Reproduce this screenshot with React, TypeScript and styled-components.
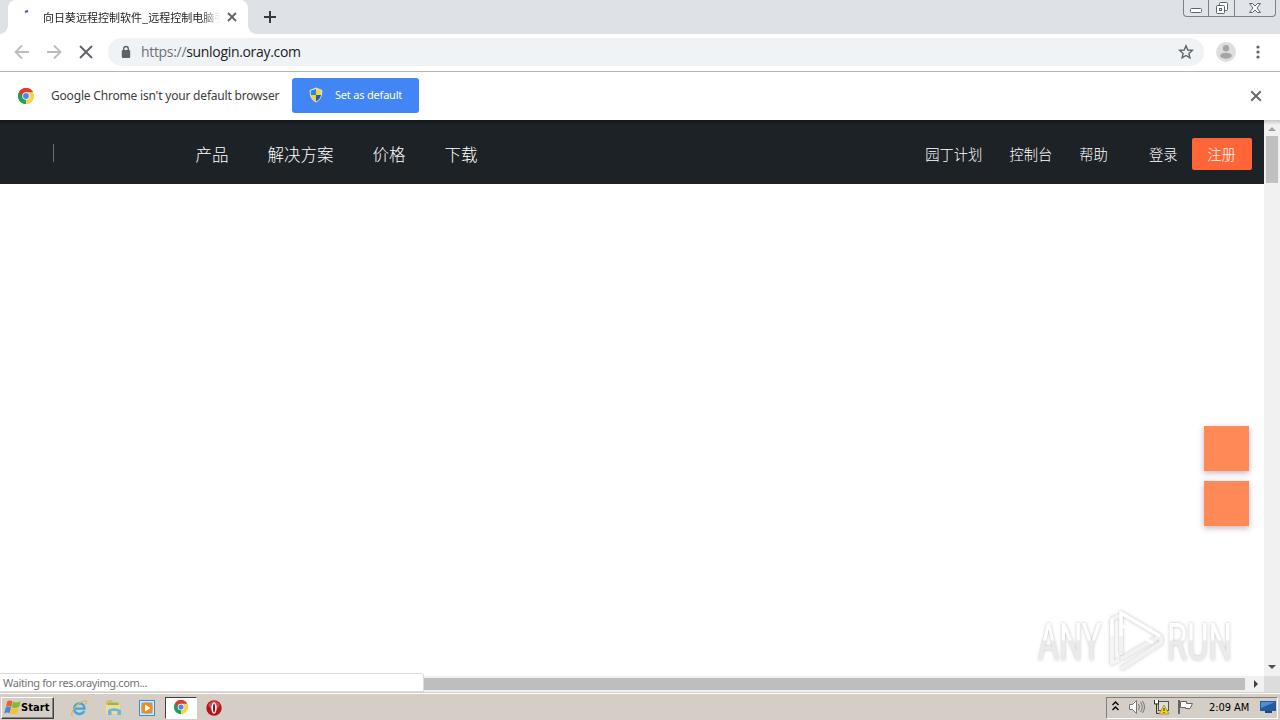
import styled, { createGlobalStyle } from "styled-components";

const GlobalStyle = createGlobalStyle`
  * {
    box-sizing: border-box;
  }
  body {
    margin: 0;
    overflow: hidden;
    background: #fff;
    font-family: "Noto Sans", "Noto Sans CJK SC", sans-serif;
  }
  svg {
    display: block;
    flex: none;
  }
`;

const Screen = styled.div`
  width: 1280px;
  height: 720px;
  display: flex;
  flex-direction: column;
  overflow: hidden;
`;

const TabStrip = styled.div`
  height: 34px;
  display: flex;
  align-items: flex-start;
  background: #dee1e6;
  flex: none;
`;

const TabEdge = styled.div<{ $side: "left" | "right" }>`
  width: 8px;
  height: 34px;
  background: radial-gradient(
    circle at ${(p) => (p.$side === "left" ? "0 26px" : "8px 26px")},
    #dee1e6 7.5px,
    #fff 8px
  );
  clip-path: inset(26px 0 0 0);
`;

const Tab = styled.div`
  width: 240px;
  height: 34px;
  display: flex;
  align-items: center;
  background: #fff;
  border-radius: 8px 8px 0 0;
  padding-left: 16px;
`;

const TabTitle = styled.div`
  width: 178px;
  margin-left: 9px;
  margin-right: 6px;
  padding-bottom: 1px;
  white-space: nowrap;
  font-family: "Noto Sans CJK SC", sans-serif;
  font-size: 11px;
  line-height: 18px;
  color: #202226;
  mask-image: linear-gradient(to right, #000 158px, transparent 177px);
`;

const NewTab = styled.div`
  padding: 11px 0 0 8px;
`;

const WindowButtons = styled.div`
  display: flex;
  height: 17px;
  margin-left: auto;
  margin-right: 4px;
  border: 1px solid #7c828c;
  border-top: none;
  border-radius: 0 0 4px 4px;
  background: #e1e4e9;
`;

const WindowButton = styled.div<{ $width: number }>`
  width: ${(p) => p.$width}px;
  display: flex;
  justify-content: center;
  & + & {
    border-left: 1px solid #7c828c;
  }
`;

const Toolbar = styled.div`
  height: 38px;
  display: flex;
  align-items: center;
  padding-left: 13px;
  padding-bottom: 2px;
  border-bottom: 1px solid #b3b5b7;
  background: #fff;
  flex: none;
`;

const NavIcons = styled.div`
  display: flex;
  gap: 14px;
  width: 95px;
`;

const AddressBar = styled.div`
  width: 1096px;
  height: 28px;
  display: flex;
  align-items: center;
  padding: 0 10px 0 13px;
  border-radius: 14px;
  background: #f0f3f6;
`;

const Url = styled.div`
  margin-left: 10px;
  flex: 1;
  font-family: "Open Sans", "Noto Sans", sans-serif;
  font-size: 14px;
  line-height: 20px;
  letter-spacing: -0.32px;
  color: #202124;
  span {
    color: #6c7075;
  }
`;

const ToolbarEnd = styled.div`
  display: flex;
  align-items: center;
  gap: 20px;
  padding-left: 12px;
`;

const InfoBar = styled.div`
  height: 48px;
  display: flex;
  align-items: center;
  padding: 0 18px;
  background: #fff;
  flex: none;
`;

const InfoText = styled.div`
  width: 228px;
  margin-left: 17px;
  margin-right: 13px;
  padding-bottom: 2px;
  white-space: nowrap;
  font-size: 12px;
  letter-spacing: -0.19px;
  color: #3b3d40;
`;

const DefaultButton = styled.button`
  width: 127px;
  height: 35px;
  display: flex;
  align-items: center;
  gap: 12px;
  margin-bottom: 2px;
  padding: 0 0 1px 17px;
  border: none;
  border-radius: 3px;
  background: #4285f4;
  color: #fff;
  font-family: "Noto Sans", sans-serif;
  font-size: 11px;
  letter-spacing: -0.2px;
  white-space: nowrap;
`;

const InfoClose = styled.div`
  margin-left: auto;
`;

const Viewport = styled.div`
  height: 572px;
  display: grid;
  grid-template-columns: 1264px 16px;
  grid-template-rows: 556px 16px;
  position: relative;
  flex: none;
`;

const Page = styled.div`
  background: #fff;
`;

const SiteHeader = styled.header`
  height: 64px;
  display: flex;
  align-items: center;
  padding: 4px 12px 0 53px;
  background: linear-gradient(#13171b, #1d2227 5px);
  color: #fff;
  font-family: "Noto Sans CJK SC", sans-serif;
  font-weight: 300;
`;

const LogoDivider = styled.div`
  width: 1px;
  height: 18px;
  margin-top: -2px;
  margin-right: 141.5px;
  background: #6a6f74;
`;

const MainNav = styled.nav`
  display: flex;
  gap: 39px;
  font-size: 16.5px;
  line-height: 24px;
`;

const SideNav = styled.nav`
  display: flex;
  align-items: center;
  gap: 27px;
  margin-left: auto;
  font-size: 14.3px;
  line-height: 20px;
`;

const Login = styled.a`
  margin-left: 14px;
`;

const Register = styled.a`
  width: 60px;
  height: 32px;
  margin-left: -12.5px;
  padding-right: 1px;
  border-radius: 2px;
  background: #ff6536;
  line-height: 32px;
  text-align: center;
`;

const FloatButtons = styled.div`
  position: absolute;
  left: 1204px;
  top: 306px;
  display: grid;
  gap: 10px;
`;

const FloatButton = styled.div`
  width: 45px;
  height: 45px;
  background: #ff8a57;
  box-shadow: 0 2px 6px rgba(120, 70, 100, 0.42);
`;

const Watermark = styled.svg`
  position: absolute;
  left: 1030px;
  top: 480px;
  font-family: Roboto, sans-serif;
  font-size: 52px;
`;

const VScroll = styled.div`
  display: flex;
  flex-direction: column;
  align-items: center;
  background: linear-gradient(#c5c5c5, #f1f1f1 5px);
`;

const VThumb = styled.div`
  width: 12px;
  height: 47px;
  background: #c0c0c0;
`;

const ScrollArrow = styled.svg`
  width: 16px;
  height: 16px;
`;

const VSpace = styled.div`
  flex: 1;
`;

const HScroll = styled.div`
  display: flex;
  align-items: center;
  background: #f1f1f1;
`;

const HThumb = styled.div`
  width: 1229px;
  height: 12px;
  margin-left: 16px;
  margin-right: 3px;
  background: #bebebe;
`;

const ScrollCorner = styled.div`
  background: #dcdcdc;
`;

const StatusBubble = styled.div`
  position: absolute;
  left: 0;
  bottom: 0;
  width: 424px;
  height: 19px;
  padding-left: 3px;
  border: 1px solid #dcdcdc;
  border-left: none;
  border-top-right-radius: 3px;
  background: #fff;
  font-size: 11px;
  line-height: 18px;
  letter-spacing: -0.38px;
  color: #717376;
`;

const Taskbar = styled.div`
  height: 28px;
  display: flex;
  align-items: center;
  padding: 2px 2px 0 1px;
  border-top: 1px solid #d5cfc6;
  box-shadow: inset 0 1px #fff;
  background: #d5cec6;
  font-family: "DejaVu Sans Condensed", "DejaVu Sans", sans-serif;
  font-size: 11px;
  color: #000;
  flex: none;
`;

const StartButton = styled.div`
  width: 53px;
  height: 22px;
  display: flex;
  align-items: center;
  padding-left: 2px;
  padding-bottom: 1px;
  border: 1px solid;
  border-color: #fff #404040 #404040 #fff;
  box-shadow: inset -1px -1px #8a857d;
  font-weight: bold;
  letter-spacing: 0.1px;
`;

const QuickLaunch = styled.div`
  display: flex;
  align-items: center;
  margin-left: 8px;
`;

const TaskItem = styled.div<{ $active?: boolean }>`
  width: ${(p) => (p.$active ? 32 : 34)}px;
  height: 22px;
  display: flex;
  align-items: center;
  justify-content: center;
  margin-left: ${(p) => (p.$active ? 1 : 0)}px;
  padding-bottom: ${(p) => (p.$active ? 2 : 0)}px;
  border: 1px solid;
  border-color: ${(p) =>
    p.$active ? "#404040 #fff #fff #404040" : "transparent"};
  background: ${(p) => (p.$active ? "#fff" : "transparent")};
`;

const Tray = styled.div`
  width: 172px;
  height: 22px;
  display: flex;
  align-items: center;
  margin-left: auto;
  padding-left: 4px;
  padding-bottom: 1px;
  border: 1px solid;
  border-color: #808080 #fff #fff #808080;
`;

const Clock = styled.div`
  width: 51px;
  margin-left: 15px;
  white-space: nowrap;
  font-family: "DejaVu Sans Condensed", sans-serif;
  letter-spacing: -0.05px;
`;

const TrayIcons = styled.div`
  display: flex;
  align-items: center;
  gap: 7px;
  svg:first-child {
    margin-right: 1px;
  }
`;

const ChromeLogo = ({ size = 16 }: { size?: number }) => (
  <svg width={size} height={size} viewBox="0 0 16 16">
    <path d="M8 8 1.1 4A8 8 0 0 1 14.9 4Z" fill="#dc3d31" />
    <path d="M8 8 14.9 4A8 8 0 0 1 8 16Z" fill="#fbd04b" />
    <path d="M8 8V16A8 8 0 0 1 1.1 4Z" fill="#1fa15b" />
    <path d="M8 4.2H15A8 8 0 0 0 1.1 4L4.7 10Z" fill="#dc3d31" />
    <path d="M11.4 9.8 8 16A8 8 0 0 0 15 4.2H8Z" fill="#fbd04b" />
    <path d="M1.1 4 4.7 10 8 12 8 16A8 8 0 0 1 1.1 4Z" fill="#1fa15b" />
    <circle cx="8" cy="8" r="3.8" fill="#f4f6f8" />
    <circle cx="8" cy="8" r="2.9" fill="#4a87ee" />
  </svg>
);

const Shield = () => (
  <svg width="14" height="16" viewBox="0 0 14 16">
    <path d="M7 .5 13.3 3C13.5 9 12 13 7 15.5 2 13 .5 9 .7 3Z" fill="#e4e0b8" />
    <path d="M7 2V8H2L1.8 3.8Z" fill="#2f86d8" />
    <path d="M7 2V8H12L12.2 3.8Z" fill="#f8d53a" />
    <path d="M7 8H2C2.5 11 4 13 7 14.5Z" fill="#f6d13a" />
    <path d="M7 8H12C11.5 11 10 13 7 14.5Z" fill="#225fae" />
  </svg>
);

const Cross = ({ size, color, width = 1.8 }: { size: number; color: string; width?: number }) => (
  <svg width={size} height={size} viewBox="0 0 10 10">
    <path d="M1 1 9 9M9 1 1 9" stroke={color} strokeWidth={width} />
  </svg>
);

const StartFlag = () => (
  <svg width="17" height="17" viewBox="0 0 16 16">
    <path d="M3 2.4Q5.5.4 8 2.2L6.8 7.5Q4.5 6 1.8 7.6Z" fill="#e9622c" />
    <path d="M8.5 2.6Q11.5 4.2 15.6 2.2L14.2 7.6Q10.5 9 7.3 7.8Z" fill="#83b93c" />
    <path d="M1.6 8.1Q4 6.6 6.6 8L5.3 13.4Q3 11.9.2 13.6Z" fill="#4688d2" />
    <path d="M7.1 8.4Q10.2 10 13.9 8.2L12.4 13.6Q9.2 15.2 5.8 13.8Z" fill="#f5c22e" />
  </svg>
);

const Explorer = () => (
  <svg width="18" height="18" viewBox="0 0 18 18">
    <path
      d="M14.3 12.2Q12.5 15 9.2 15 4.2 14.6 4.2 9.6 4.6 4.6 9.4 4.4 14.2 4.6 14.4 9.6H5"
      fill="none"
      stroke="#3fa5e2"
      strokeWidth="2.4"
    />
    <path
      d="M3 16.4Q0 16.4 3.2 11 8 3.6 14.6 1.8 17.8 1.4 16 5.2"
      fill="none"
      stroke="#e2b63c"
      strokeWidth="1.1"
    />
  </svg>
);

const Folder = () => (
  <svg width="17" height="17" viewBox="0 0 17 17">
    <path d="M1 3 3 1H7L8 3H14V14H1Z" fill="#d9bd66" />
    <path d="M3 4H13V6H3Z" fill="#80bb65" />
    <path d="M1 6H15V15H1Z" fill="#f2dc8e" />
    <path d="M3 16V11Q8.5 7.5 16 11V16H12.5V12H6.5V16Z" fill="#65b8e3" />
  </svg>
);

const MediaPlayer = () => (
  <svg width="16" height="16" viewBox="0 0 16 16">
    <rect x=".5" y=".5" width="15" height="15" fill="#d9ebf9" stroke="#438cc9" />
    <rect x="2.5" y="2.5" width="11" height="11" fill="#65a9df" />
    <circle cx="8" cy="8" r="5.7" fill="#f58b19" />
    <path d="M6 4.5 11.5 8 6 11.5Z" fill="#fff" />
  </svg>
);

const OperaLogo = () => (
  <svg width="16" height="16" viewBox="0 0 16 16">
    <circle cx="8" cy="8" r="7.7" fill="#b3161c" />
    <path d="M2 5Q8-3 14 5L12 8H4Z" fill="#cf4a50" />
    <ellipse cx="8" cy="8" rx="2.7" ry="5.8" fill="#fff" />
    <ellipse cx="8" cy="8" rx="1" ry="4.6" fill="#8a1018" />
  </svg>
);

// Glyphs are squeezed with a transform so the wordmark stays narrow.
const WatermarkLogo = () => (
  <Watermark width="215" height="76" viewBox="0 0 215 76">
    <defs>
      <filter id="soft" x="-10%" y="-10%" width="120%" height="130%">
        <feDropShadow dx="0" dy="0" stdDeviation="1.7" floodColor="#777" floodOpacity=".5" />
      </filter>
      <linearGradient id="fade" gradientUnits="userSpaceOnUse" x1="0" y1="22" x2="0" y2="60">
        <stop offset=".47" stopColor="#fff" />
        <stop offset=".5" stopColor="#ebebeb" />
      </linearGradient>
    </defs>
    <g filter="url(#soft)" fill="url(#fade)">
      <text transform="translate(8 0) scale(.624 1)" y="60">
        ANY
      </text>
      <text transform="translate(137 0) scale(.63 1)" y="60">
        RUN
      </text>
    </g>
    <g filter="url(#soft)" fill="none" strokeWidth="4" strokeLinejoin="round">
      <path d="M91 55V13L130 36 91 59" stroke="#f2f2f2" />
      <path d="M89 16 82 19V63L89 60" stroke="#f5f5f5" />
      <path d="M91 69 131 43V36" stroke="#f2f2f2" />
    </g>
    <path d="M91 36V13L130 36M91 25 123 43M82 36V19" fill="none" stroke="#fff" strokeWidth="3" />
  </Watermark>
);

const mainLinks = ["产品", "解决方案", "价格", "下载"];
const sideLinks = ["园丁计划", "控制台", "帮助"];

function BrowserTabs() {
  return (
    <TabStrip>
      <TabEdge $side="left" />
      <Tab>
        <svg width="10" height="16" viewBox="0 0 10 16">
          <path d="M1 3 4 2" stroke="#3d57b5" strokeWidth="2" />
        </svg>
        <TabTitle>向日葵远程控制软件_远程控制电脑手</TabTitle>
        <Cross size={10} color="#5f6368" />
      </Tab>
      <TabEdge $side="right" />
      <NewTab>
        <svg width="12" height="12" viewBox="0 0 12 12">
          <path d="M6 0V12M0 6H12" stroke="#36393e" strokeWidth="2" />
        </svg>
      </NewTab>
      <WindowButtons>
        <WindowButton $width={24}>
          <svg width="14" height="16" viewBox="0 0 14 16">
            <rect x="1.5" y="8.5" width="11" height="4" rx="1" fill="#fff" stroke="#5d636c" />
          </svg>
        </WindowButton>
        <WindowButton $width={26}>
          <svg width="14" height="16" viewBox="0 0 14 16" fill="#fff" stroke="#5d636c">
            <rect x="4.5" y="2.5" width="8" height="8" rx="1" />
            <rect x="1.5" y="5.5" width="8" height="8" rx="1" />
            <rect x="4.5" y="8.5" width="2" height="2" />
          </svg>
        </WindowButton>
        <WindowButton $width={41}>
          <svg width="14" height="16" viewBox="0 0 14 16">
            <path
              d="M1.5 3.5H4.5L7 6 9.5 3.5H12.5L9 8 12.5 12.5H9.5L7 10 4.5 12.5H1.5L5 8Z"
              fill="#fff"
              stroke="#5d636c"
            />
          </svg>
        </WindowButton>
      </WindowButtons>
    </TabStrip>
  );
}

function BrowserToolbar() {
  return (
    <Toolbar>
      <NavIcons>
        <svg width="18" height="18" viewBox="0 0 18 18" fill="none" stroke="#babcbe" strokeWidth="1.8">
          <path d="M16 9H3M9 2.5 2.5 9 9 15.5" />
        </svg>
        <svg width="18" height="18" viewBox="0 0 18 18" fill="none" stroke="#babcbe" strokeWidth="1.8">
          <path d="M2 9H15M9 2.5 15.5 9 9 15.5" />
        </svg>
        <svg width="18" height="18" viewBox="0 0 18 18" stroke="#5f6368" strokeWidth="1.9">
          <path d="M3 3 15 15M15 3 3 15" />
        </svg>
      </NavIcons>
      <AddressBar>
        <svg width="10" height="14" viewBox="0 0 10 14">
          <rect x=".8" y="5" width="8.4" height="8" rx="1" fill="#5f6368" />
          <path d="M2.7 6V3.8Q2.7 1.5 5 1.5T7.3 3.8V6" fill="none" stroke="#5f6368" strokeWidth="1.4" />
        </svg>
        <Url>
          <span>https://</span>sunlogin.oray.com
        </Url>
        <svg width="16" height="16" viewBox="0 0 16 16">
          <path
            d="M8 1.8 9.8 6 14.3 6.4 10.9 9.4 11.9 13.8 8 11.5 4.1 13.8 5.1 9.4 1.7 6.4 6.2 6Z"
            fill="none"
            stroke="#5f6368"
            strokeWidth="1.4"
          />
        </svg>
      </AddressBar>
      <ToolbarEnd>
        <svg width="20" height="20" viewBox="0 0 20 20">
          <circle cx="10" cy="10" r="10" fill="#dedede" />
          <circle cx="10" cy="6.2" r="3.2" fill="#a5a5a5" />
          <ellipse cx="10" cy="13.7" rx="5.8" ry="3" fill="#a5a5a5" />
        </svg>
        <svg width="4" height="14" viewBox="0 0 4 14" fill="#5f6368">
          <circle cx="2" cy="2" r="1.6" />
          <circle cx="2" cy="7" r="1.6" />
          <circle cx="2" cy="12" r="1.6" />
        </svg>
      </ToolbarEnd>
    </Toolbar>
  );
}

function App() {
  return (
    <>
      <GlobalStyle />
      <Screen>
        <BrowserTabs />
        <BrowserToolbar />
        <InfoBar>
          <ChromeLogo />
          <InfoText>Google Chrome isn't your default browser</InfoText>
          <DefaultButton>
            <Shield />
            Set as default
          </DefaultButton>
          <InfoClose>
            <Cross size={12} color="#696969" width={1.6} />
          </InfoClose>
        </InfoBar>
        <Viewport>
          <Page>
            <SiteHeader>
              <LogoDivider />
              <MainNav>
                {mainLinks.map((link) => (
                  <a key={link}>{link}</a>
                ))}
              </MainNav>
              <SideNav>
                {sideLinks.map((link) => (
                  <a key={link}>{link}</a>
                ))}
                <Login>登录</Login>
                <Register>注册</Register>
              </SideNav>
            </SiteHeader>
          </Page>
          <VScroll>
            <ScrollArrow viewBox="0 0 16 16">
              <path d="M4 11 8 7 12 11Z" fill="#a0a0a0" />
            </ScrollArrow>
            <VThumb />
            <VSpace />
            <ScrollArrow viewBox="0 0 16 16">
              <path d="M4 5H12L8 9Z" fill="#505050" />
            </ScrollArrow>
          </VScroll>
          <HScroll>
            <HThumb />
            <ScrollArrow viewBox="0 0 16 16">
              <path d="M6 4V12L10 8Z" fill="#404040" />
            </ScrollArrow>
          </HScroll>
          <ScrollCorner />
          <FloatButtons>
            <FloatButton />
            <FloatButton />
          </FloatButtons>
          <WatermarkLogo />
          <StatusBubble>Waiting for res.orayimg.com...</StatusBubble>
        </Viewport>
        <Taskbar>
          <StartButton>
            <StartFlag />
            Start
          </StartButton>
          <QuickLaunch>
            <TaskItem>
              <Explorer />
            </TaskItem>
            <TaskItem>
              <Folder />
            </TaskItem>
            <TaskItem>
              <MediaPlayer />
            </TaskItem>
            <TaskItem $active>
              <ChromeLogo size={14} />
            </TaskItem>
            <TaskItem>
              <OperaLogo />
            </TaskItem>
          </QuickLaunch>
          <Tray>
            <TrayIcons>
              <svg width="9" height="12" viewBox="0 0 9 12" fill="none" stroke="#000" strokeWidth="1.4">
                <path d="M1.5 4 4.5 1 7.5 4M1.5 9 4.5 6 7.5 9" />
              </svg>
              <svg width="18" height="16" viewBox="0 0 18 16" fill="none" stroke="#777">
                <path d="M1.5 5.5H4.5L8.5 1.5V14.5L4.5 10.5H1.5Z" fill="#fff" />
                <path d="M10.5 5Q12.5 8 10.5 11M12.5 3Q16 8 12.5 13M14.5 2Q18.5 8 14.5 14" />
              </svg>
              <svg width="17" height="16" viewBox="0 0 17 16">
                <rect x="5.5" y="2.5" width="10" height="9" fill="#ddd" stroke="#555" />
                <path d="M1.5 1V5H5.5V1M3.5 5V14.5H8" fill="none" stroke="#333" />
                <path d="M2 1H5V4H2Z" fill="#fff" />
                <path d="M11 6 16 15H6Z" fill="#f5d628" stroke="#9c8415" strokeWidth=".7" />
                <path d="M11 9V12M11 13V14" stroke="#222" />
              </svg>
              <svg width="17" height="16" viewBox="0 0 17 16">
                <path d="M2 1V15" stroke="#666" strokeWidth="2" />
                <path d="M3.5 2.5H9.5V4.5H15.5L13 9.5H8.5V8.5H3.5Z" fill="#fff" stroke="#666" />
              </svg>
            </TrayIcons>
            <Clock>2:09 AM</Clock>
            <svg width="16" height="16" viewBox="0 0 16 16">
              <path d="M0 2H16V12H0Z" fill="#255a9e" />
              <path d="M1 3H15L1 9Z" fill="#4d91d2" />
              <path d="M5 12H12V14H5Z" fill="#234a77" />
            </svg>
          </Tray>
        </Taskbar>
      </Screen>
    </>
  );
}

export default App;
